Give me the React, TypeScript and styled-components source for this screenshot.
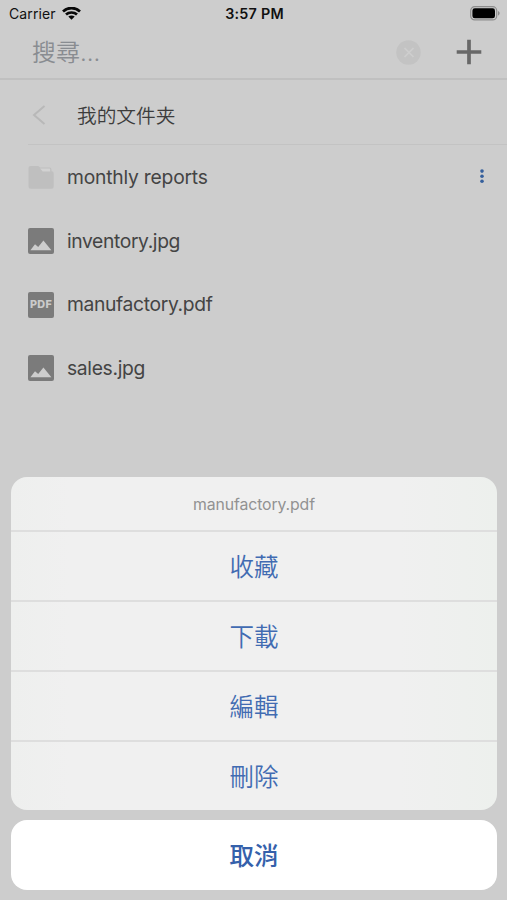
import React from "react";
import styled, { createGlobalStyle } from "styled-components";

const GlobalStyle = createGlobalStyle`
  * { box-sizing: border-box; }
  body { margin: 0; background: #cdcdcd; }
  button, input { font: inherit; border: 0; background: none; padding: 0; margin: 0; }
  svg { display: block; }
`;

const Screen = styled.div`
  position: relative;
  width: 507px;
  height: 900px;
  overflow: hidden;
  background: #cdcdcd;
  color: #444;
  font-family: Inter, "Noto Sans CJK TC", sans-serif;
`;

const StatusBar = styled.header`
  display: grid;
  grid-template-columns: 1fr auto 1fr;
  align-items: center;
  height: 27px;
  padding: 0 7px 0 9px;
  color: #111;
  font-size: 14px;
  line-height: 27px;
`;

const Carrier = styled.div`
  display: flex;
  align-items: center;
  gap: 6px;
  letter-spacing: 0.1px;
`;

const Clock = styled.div`
  font-weight: 600;
  font-size: 14.3px;
  letter-spacing: 0.25px;
`;

const Power = styled.div`
  display: flex;
  justify-content: flex-end;
`;

const SearchBar = styled.div`
  display: flex;
  align-items: center;
  height: 53px;
  padding: 0 25px 1px 32px;
  border-bottom: 2px solid #c0c0c0;
`;

const SearchInput = styled.input`
  flex: 1;
  min-width: 0;
  height: 40px;
  padding-top: 1px;
  outline: 0;
  font-size: 24px;
  font-weight: 350;
  &::placeholder { color: #898c91; opacity: 1; }
`;

const IconButton = styled.button<{ $gap?: number }>`
  flex: none;
  margin-left: ${(p) => p.$gap ?? 0}px;
`;

const FolderHeader = styled.div`
  display: flex;
  align-items: center;
  height: 65px;
  margin-left: 28px;
  padding: 6px 0 0 4px;
  border-bottom: 1px solid #c3c3c3;
`;

const FolderTitle = styled.h1`
  margin: 0 0 0 31px;
  font: 350 19.7px/28px "Noto Sans CJK SC", sans-serif;
  color: #3c3c3c;
`;

const FileList = styled.ul`
  margin: 0;
  padding: 1px 20px 0 28px;
  list-style: none;
`;

const FileRow = styled.li`
  display: flex;
  align-items: center;
  height: 63.5px;
`;

const FileName = styled.span<{ $tracking: number }>`
  flex: 1;
  margin: -1px 0 0 13px;
  font-size: 19.3px;
  line-height: 28px;
  letter-spacing: ${(p) => p.$tracking}px;
`;

const ActionSheet = styled.div`
  position: absolute;
  left: 11px;
  right: 10px;
  bottom: 10px;
  display: flex;
  flex-direction: column;
  gap: 10px;
`;

const Actions = styled.div`
  overflow: hidden;
  border-radius: 16px;
  background: linear-gradient(90deg, #eeefee, #f0f0f0 12%, #f0f0f0 80%, #edf0ed);
`;

const SheetTitle = styled.div`
  height: 53px;
  color: #929292;
  font-size: 15.8px;
  line-height: 55px;
  letter-spacing: -0.11px;
  text-align: center;
`;

const Action = styled.button`
  display: block;
  width: 100%;
  height: 70px;
  padding-bottom: 1px;
  border-top: 2px solid #dedede;
  color: #416bb2;
  font: 350 24.5px/67px "Noto Sans CJK TC", sans-serif;
`;

const CancelButton = styled.button`
  height: 70px;
  border-radius: 16px;
  background: #fff;
  color: #3561ab;
  font: 500 24.5px/70px "Noto Sans CJK TC", sans-serif;
`;

const WifiIcon = () => (
  <svg width="19" height="14" viewBox="0 0 19 14" fill="none" stroke="#080808" strokeWidth="2.7">
    <path d="M1 4.4C5.8-.1 13.2-.1 18 4.4M4 7.6c3-2.8 8-2.8 11 0" />
    <path d="m9.5 12.8-3.2-3.2c1.8-1.5 4.6-1.5 6.4 0Z" fill="#080808" stroke="none" />
  </svg>
);

const BatteryIcon = () => (
  <svg width="30" height="15" viewBox="0 0 30 15">
    <rect x=".7" y=".7" width="26" height="13.2" rx="4" fill="none" stroke="#8d8d8d" strokeWidth="1.2" />
    <rect x="2.4" y="2.3" width="22.6" height="10" rx="2.4" fill="#000" />
    <path d="M28 5v4.6c2.2-.8 2.2-3.8 0-4.6Z" fill="#8d8d8d" />
  </svg>
);

const ClearIcon = () => (
  <svg width="25" height="25" viewBox="0 0 25 25">
    <circle cx="12.5" cy="12.5" r="12.2" fill="#c3c3c3" />
    <path d="m8.5 8 9 9m0-9-9 9" stroke="#cecece" strokeWidth="1.7" />
  </svg>
);

const PlusIcon = () => (
  <svg width="26" height="26" viewBox="0 0 26 26">
    <path d="M13 .7v24.6M.7 13h24.6" stroke="#686868" strokeWidth="3.7" />
  </svg>
);

const BackIcon = () => (
  <svg width="14" height="20" viewBox="0 0 14 20">
    <path d="M12.5 1 2 10l10.5 9" fill="none" stroke="#b8b8b8" strokeWidth="2" />
  </svg>
);

const MoreIcon = () => (
  <svg width="10" height="18" viewBox="0 0 10 18" fill="#355f9c">
    <circle cx="5" cy="2.1" r="1.8" />
    <circle cx="5" cy="7.2" r="1.8" />
    <circle cx="5" cy="12.3" r="1.8" />
  </svg>
);

type FileKind = "folder" | "image" | "pdf";

const PdfBadge = styled.span`
  display: grid;
  place-items: center;
  width: 26px;
  height: 26px;
  border-radius: 2px;
  background: #7b7b7b;
  color: #cbcbcb;
  font-size: 10.8px;
  font-weight: 800;
  letter-spacing: 0.3px;
  line-height: 26px;
`;

const FileIcon = ({ kind }: { kind: FileKind }) => {
  if (kind === "pdf") return <PdfBadge>PDF</PdfBadge>;
  if (kind === "folder")
    return (
      <svg width="26" height="26" viewBox="0 0 26 26">
        <path d="M2.5 1h7.7l2 1.6h9.3a2 2 0 0 1 2 2v1.6a2.3 2.3 0 0 1 2.2 2.3v12.9a2.3 2.3 0 0 1-2.3 2.3H2.8a2.3 2.3 0 0 1-2.3-2.3V3a2 2 0 0 1 2-2Z" fill="#bfbfbf" />
        <path d="M12.2 3.4h9.2a.8.8 0 0 1 .8.8v2.3h-7.5Z" fill="#d2d2d2" />
      </svg>
    );
  return (
    <svg width="26" height="26" viewBox="0 0 26 26">
      <rect width="26" height="26" rx="2" fill="#7b7b7b" />
      <path d="m2.4 22.3 4.6-6 3.2 2.6 5.2-6.3 8 9.7Z" fill="#cdcdcd" />
    </svg>
  );
};

const files: { name: string; kind: FileKind; tracking: number }[] = [
  { name: "monthly reports", kind: "folder", tracking: -0.22 },
  { name: "inventory.jpg", kind: "image", tracking: -0.38 },
  { name: "manufactory.pdf", kind: "pdf", tracking: -0.35 },
  { name: "sales.jpg", kind: "image", tracking: -0.33 },
];

export default function App() {
  return (
    <Screen>
      <GlobalStyle />
      <StatusBar>
        <Carrier>Carrier <WifiIcon /></Carrier>
        <Clock>3:57 PM</Clock>
        <Power><BatteryIcon /></Power>
      </StatusBar>
      <SearchBar>
        <SearchInput placeholder="搜尋..." />
        <IconButton><ClearIcon /></IconButton>
        <IconButton $gap={35}><PlusIcon /></IconButton>
      </SearchBar>
      <FolderHeader>
        <BackIcon />
        <FolderTitle>我的文件夹</FolderTitle>
      </FolderHeader>
      <FileList>
        {files.map((file) => (
          <FileRow key={file.name}>
            <FileIcon kind={file.kind} />
            <FileName $tracking={file.tracking}>{file.name}</FileName>
            {file.kind === "folder" && <IconButton><MoreIcon /></IconButton>}
          </FileRow>
        ))}
      </FileList>
      <ActionSheet>
        <Actions>
          <SheetTitle>manufactory.pdf</SheetTitle>
          {["收藏", "下載", "編輯", "刪除"].map((label) => (
            <Action key={label}>{label}</Action>
          ))}
        </Actions>
        <CancelButton>取消</CancelButton>
      </ActionSheet>
    </Screen>
  );
}
